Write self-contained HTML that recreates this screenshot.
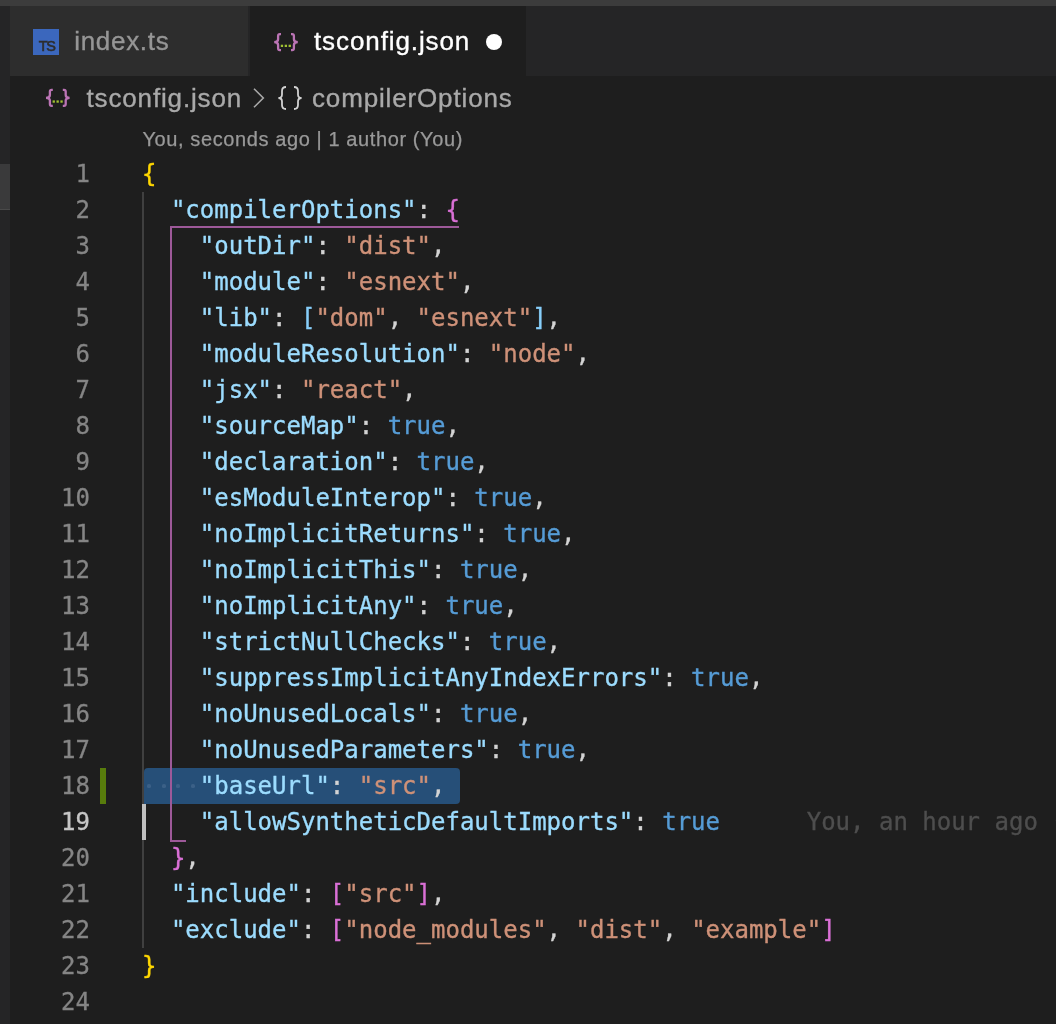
<!DOCTYPE html>
<html><head><meta charset="utf-8"><title>tsconfig.json</title>
<style>
html,body{margin:0;padding:0;background:#1e1e1e;}
body{width:1056px;height:1024px;position:relative;overflow:hidden;font-family:"Liberation Sans",sans-serif;}
.abs{position:absolute;}
#topbar{left:0;top:0;width:1056px;height:6px;background:#3c3c3c;}
#side{left:0;top:6px;width:10px;height:1018px;background:#252526;}
#sthumb{left:0;top:164px;width:10px;height:46px;background:#3a3a3b;border-bottom:1px solid #4a4a4a;box-sizing:border-box;}
#tabs{left:10px;top:6px;width:1046px;height:70px;background:#252526;}
#tab1{left:10px;top:6px;width:238px;height:70px;background:#2d2d2d;}
#tab2{left:250px;top:6px;width:276px;height:70px;background:#1e1e1e;}
.ui{position:absolute;white-space:pre;font-size:26px;line-height:30px;-webkit-text-stroke:0.35px;}
#tsicon{left:33px;top:29px;width:26px;height:26px;background:#3b67bd;}
#tsicon span{position:absolute;left:5.8px;top:10.1px;font-size:14.5px;line-height:14.5px;color:#2d2d2d;letter-spacing:-1.3px;-webkit-text-stroke:0.6px;}
#t1{left:74.2px;top:26px;color:#969696;letter-spacing:0.7px;}
#t2{left:314px;top:26px;color:#ffffff;letter-spacing:0.9px;}
#dot{left:486px;top:34px;width:16px;height:16px;border-radius:50%;background:#ffffff;}
#bc1{left:86.5px;top:83px;color:#a9a9a9;letter-spacing:0.85px;}
#bc2{left:312px;top:83px;color:#a9a9a9;letter-spacing:0.85px;}
#lens{left:142.5px;top:126px;color:#999999;font-size:20px;line-height:26px;letter-spacing:0.6px;-webkit-text-stroke:0.25px;}
.ln{position:absolute;left:20px;-webkit-text-stroke:0.3px;width:70px;text-align:right;color:#858585;font:24px/36px "DejaVu Sans Mono","Liberation Mono",monospace;height:36px;white-space:pre;}
.ln.act{color:#c6c6c6;}
.cl{position:absolute;left:142px;-webkit-text-stroke:0.35px;color:#d4d4d4;font:24px/36px "DejaVu Sans Mono","Liberation Mono",monospace;height:36px;white-space:pre;}
.k{color:#9cdcfe}.s{color:#ce9178}.p{color:#d4d4d4}.t{color:#569cd6}
.b1{color:#ffd700}.b2{color:#da70d6}.b3{color:#87cefa}.bl{color:#4e4e4e}
#sel{left:144px;top:768px;width:316px;height:36px;background:#264f78;border-radius:4px 4px 4px 0;}
.ws{position:absolute;top:783.6px;width:4px;height:4px;border-radius:40%;background:#3b6087;}
#gadd{left:100px;top:768px;width:6px;height:36px;background:#587c0c;}
#g0{left:142px;top:192px;width:2px;height:756px;background:#404040;}
#cursor{left:142px;top:804px;width:4px;height:36px;background:#c0c0c0;}
#pv{left:170px;top:226px;width:2px;height:616px;background:#9d5999;}
#ph1{left:170px;top:226px;width:289px;height:2px;background:#9d5999;}
#ph2{left:170px;top:840px;width:16px;height:2px;background:#9d5999;}
svg{position:absolute;overflow:visible;}
</style></head><body>
<div id="root" style="position:absolute;left:0;top:0;width:1056px;height:1024px;will-change:transform;">
<div id="topbar" class="abs"></div>
<div id="side" class="abs"></div>
<div id="sthumb" class="abs"></div>
<div id="tabs" class="abs"></div>
<div id="tab1" class="abs"></div>
<div id="tab2" class="abs"></div>
<div id="tsicon" class="abs"><span>TS</span></div>
<div id="t1" class="ui">index.ts</div>
<svg style="left:0;top:0" width="1056" height="130" viewBox="0 0 1056 130" fill="none">
 <g id="jsonicon" stroke="#bb74b5" stroke-width="2.3">
  <path d="M281 34.1 h-1.2 q-1.7 0 -1.7 1.8 v3.4 q0 2.8 -3.9 2.8 q3.9 0 3.9 2.8 v3.4 q0 1.8 1.7 1.8 h1.2"/>
  <path d="M291 34.1 h1.2 q1.7 0 1.7 1.8 v3.4 q0 2.8 3.9 2.8 q-3.9 0 -3.9 2.8 v3.4 q0 1.8 -1.7 1.8 h-1.2"/>
 </g>
 <g fill="#a0c033"><rect x="280.8" y="44.7" width="2.3" height="2.3"/><rect x="284.7" y="44.7" width="2.3" height="2.3"/><rect x="288.6" y="44.7" width="2.3" height="2.3"/></g>
 <g transform="translate(-228.2 55.7)">
  <g stroke="#bb74b5" stroke-width="2.3">
  <path d="M281 34.1 h-1.2 q-1.7 0 -1.7 1.8 v3.4 q0 2.8 -3.9 2.8 q3.9 0 3.9 2.8 v3.4 q0 1.8 1.7 1.8 h1.2"/>
  <path d="M291 34.1 h1.2 q1.7 0 1.7 1.8 v3.4 q0 2.8 3.9 2.8 q-3.9 0 -3.9 2.8 v3.4 q0 1.8 -1.7 1.8 h-1.2"/>
  </g>
  <g fill="#a0c033"><rect x="280.8" y="44.7" width="2.3" height="2.3"/><rect x="284.7" y="44.7" width="2.3" height="2.3"/><rect x="288.6" y="44.7" width="2.3" height="2.3"/></g>
 </g>
 <path d="M254 88.7 L263.3 98 L254 107.3" stroke="#a9a9a9" stroke-width="1.6"/>
 <g stroke="#d2d2d2" stroke-width="1.8">
  <path d="M286 87 q-4 0 -4 4 v3.5 q0 3.5 -3.6 3.5 q3.6 0 3.6 3.5 v3.5 q0 4 4 4"/>
  <path d="M294 87 q4 0 4 4 v3.5 q0 3.5 3.6 3.5 q-3.6 0 -3.6 3.5 v3.5 q0 4 -4 4"/>
 </g>
</svg>
<div id="t2" class="ui">tsconfig.json</div>
<div id="dot" class="abs"></div>
<div id="bc1" class="ui">tsconfig.json</div>
<div id="bc2" class="ui">compilerOptions</div>
<div id="lens" class="ui">You, seconds ago | 1 author (You)</div>
<div id="sel" class="abs"></div>
<div class="ws" style="left:147.2px"></div><div class="ws" style="left:161.9px"></div><div class="ws" style="left:176.2px"></div><div class="ws" style="left:190.6px"></div>
<div id="gadd" class="abs"></div>
<div id="g0" class="abs"></div>
<div id="pv" class="abs"></div><div id="ph1" class="abs"></div><div id="ph2" class="abs"></div>
<div id="cursor" class="abs"></div>
<div class="ln" style="top:156px">1</div>
<div class="cl" style="top:156px"><span class="b1">{</span></div>
<div class="ln" style="top:192px">2</div>
<div class="cl" style="top:192px">  <span class="k">"compilerOptions"</span><span class="p">: </span><span class="b2">{</span></div>
<div class="ln" style="top:228px">3</div>
<div class="cl" style="top:228px">    <span class="k">"outDir"</span><span class="p">: </span><span class="s">"dist"</span><span class="p">,</span></div>
<div class="ln" style="top:264px">4</div>
<div class="cl" style="top:264px">    <span class="k">"module"</span><span class="p">: </span><span class="s">"esnext"</span><span class="p">,</span></div>
<div class="ln" style="top:300px">5</div>
<div class="cl" style="top:300px">    <span class="k">"lib"</span><span class="p">: </span><span class="b3">[</span><span class="s">"dom"</span><span class="p">, </span><span class="s">"esnext"</span><span class="b3">]</span><span class="p">,</span></div>
<div class="ln" style="top:336px">6</div>
<div class="cl" style="top:336px">    <span class="k">"moduleResolution"</span><span class="p">: </span><span class="s">"node"</span><span class="p">,</span></div>
<div class="ln" style="top:372px">7</div>
<div class="cl" style="top:372px">    <span class="k">"jsx"</span><span class="p">: </span><span class="s">"react"</span><span class="p">,</span></div>
<div class="ln" style="top:408px">8</div>
<div class="cl" style="top:408px">    <span class="k">"sourceMap"</span><span class="p">: </span><span class="t">true</span><span class="p">,</span></div>
<div class="ln" style="top:444px">9</div>
<div class="cl" style="top:444px">    <span class="k">"declaration"</span><span class="p">: </span><span class="t">true</span><span class="p">,</span></div>
<div class="ln" style="top:480px">10</div>
<div class="cl" style="top:480px">    <span class="k">"esModuleInterop"</span><span class="p">: </span><span class="t">true</span><span class="p">,</span></div>
<div class="ln" style="top:516px">11</div>
<div class="cl" style="top:516px">    <span class="k">"noImplicitReturns"</span><span class="p">: </span><span class="t">true</span><span class="p">,</span></div>
<div class="ln" style="top:552px">12</div>
<div class="cl" style="top:552px">    <span class="k">"noImplicitThis"</span><span class="p">: </span><span class="t">true</span><span class="p">,</span></div>
<div class="ln" style="top:588px">13</div>
<div class="cl" style="top:588px">    <span class="k">"noImplicitAny"</span><span class="p">: </span><span class="t">true</span><span class="p">,</span></div>
<div class="ln" style="top:624px">14</div>
<div class="cl" style="top:624px">    <span class="k">"strictNullChecks"</span><span class="p">: </span><span class="t">true</span><span class="p">,</span></div>
<div class="ln" style="top:660px">15</div>
<div class="cl" style="top:660px">    <span class="k">"suppressImplicitAnyIndexErrors"</span><span class="p">: </span><span class="t">true</span><span class="p">,</span></div>
<div class="ln" style="top:696px">16</div>
<div class="cl" style="top:696px">    <span class="k">"noUnusedLocals"</span><span class="p">: </span><span class="t">true</span><span class="p">,</span></div>
<div class="ln" style="top:732px">17</div>
<div class="cl" style="top:732px">    <span class="k">"noUnusedParameters"</span><span class="p">: </span><span class="t">true</span><span class="p">,</span></div>
<div class="ln" style="top:768px">18</div>
<div class="cl" style="top:768px">    <span class="k">"baseUrl"</span><span class="p">: </span><span class="s">"src"</span><span class="p">,</span></div>
<div class="ln act" style="top:804px">19</div>
<div class="cl" style="top:804px">    <span class="k">"allowSyntheticDefaultImports"</span><span class="p">: </span><span class="t">true</span><span class="bl">      You, an hour ago • Initial commit</span></div>
<div class="ln" style="top:840px">20</div>
<div class="cl" style="top:840px">  <span class="b2">}</span><span class="p">,</span></div>
<div class="ln" style="top:876px">21</div>
<div class="cl" style="top:876px">  <span class="k">"include"</span><span class="p">: </span><span class="b2">[</span><span class="s">"src"</span><span class="b2">]</span><span class="p">,</span></div>
<div class="ln" style="top:912px">22</div>
<div class="cl" style="top:912px">  <span class="k">"exclude"</span><span class="p">: </span><span class="b2">[</span><span class="s">"node_modules"</span><span class="p">, </span><span class="s">"dist"</span><span class="p">, </span><span class="s">"example"</span><span class="b2">]</span></div>
<div class="ln" style="top:948px">23</div>
<div class="cl" style="top:948px"><span class="b1">}</span></div>
<div class="ln" style="top:984px">24</div>
<div class="cl" style="top:984px"></div>
</div>
</body></html>
